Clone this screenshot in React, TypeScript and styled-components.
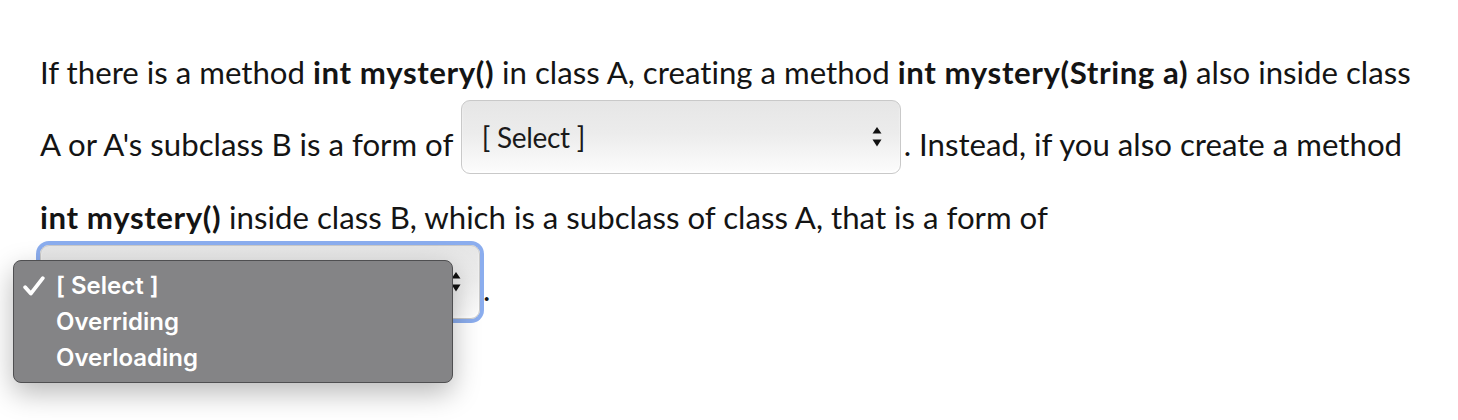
import React from "react";
import styled, { createGlobalStyle } from "styled-components";

const GlobalStyle = createGlobalStyle`
  body {
    margin: 0;
    background: #ffffff;
    font-family: Lato, "Open Sans", sans-serif;
  }
`

const Page = styled("main")`
  min-height: 420px;
`

const Question = styled("p")`
  margin: 0;
  padding: 45px 0 0 40px;
  width: 1390px;
  font-size: 31.2px;
  line-height: 55px;
  color: #141414;
  font-variant-ligatures: none;
`

const Code = styled("strong")`
  font-weight: 700;
  letter-spacing: 0.6px;
`

const SelectBox = styled("span")<{ $focused?: boolean }>`
  position: relative;
  display: inline-flex;
  align-items: center;
  justify-content: space-between;
  box-sizing: border-box;
  width: 440px;
  height: 74px;
  margin: 0 3px 16px 0;
  padding: 0 18px 0 20px;
  vertical-align: 8px;
  border: 1px solid #c9c9c9;
  border-radius: 9px;
  background: linear-gradient(to bottom, #e6e6e6 0%, #ececec 45%, #f8f8f8 85%, #fcfcfc 100%);
  box-shadow: ${(p) =>
    p.$focused
      ? "0 0 0 4px #8badee, inset 0 -2px 2px rgba(255,255,255,0.9)"
      : "inset 0 -2px 2px rgba(255,255,255,0.9)"};
  font-size: 28px;
  line-height: normal;
  letter-spacing: 0;
  color: #1a1a1a;
`

const Placeholder = styled("span")`
  letter-spacing: -0.3px;
`

const Menu = styled("div")`
  position: absolute;
  left: -28px;
  top: 14px;
  z-index: 2;
  box-sizing: border-box;
  width: 440px;
  padding: 7px 0 6px;
  border: 1px solid #4f4f51;
  border-radius: 8px;
  background: #848486;
  box-shadow: 0 10px 28px rgba(0, 0, 0, 0.28);
  font-family: Inter, "Liberation Sans", sans-serif;
  font-weight: 600;
  font-size: 24px;
  line-height: 36px;
  color: #ffffff;
`

const Option = styled("div")`
  display: flex;
  align-items: center;
`

const CheckSlot = styled("span")`
  display: inline-flex;
  align-items: center;
  width: 42px;
  padding-left: 9px;
  box-sizing: border-box;
  height: 36px;
`

const Arrows = () => (
  <svg width="10" height="22" viewBox="0 0 10 22">
    <path d="M5 1 L9.5 7.5 L0.5 7.5 Z" fill="#111" />
    <path d="M0.5 13.5 L9.5 13.5 L5 20.5 Z" fill="#111" />
  </svg>
)

const Check = () => (
  <svg width="22" height="20" viewBox="0 0 22 20">
    <path
      d="M2.2 11.2 L7.8 17.6 L19.8 2.2"
      fill="none"
      stroke="#fff"
      strokeWidth="3.8"
      strokeLinecap="round"
      strokeLinejoin="round"
    />
  </svg>
)

const options = ["[ Select ]", "Overriding", "Overloading"]

const App: React.FunctionComponent = () => (
  <Page>
    <GlobalStyle />
    <Question>
      If there is a method <Code>int mystery()</Code> in class A, creating a method{" "}
      <Code>int mystery(String a)</Code> also inside class A or A's subclass B is a form of{" "}
      <SelectBox>
        <Placeholder>[ Select ]</Placeholder>
        <Arrows />
      </SelectBox>
      . Instead, if you also create a method <Code>int mystery()</Code> inside class B, which
      is a subclass of class A, that is a form of{" "}
      <SelectBox $focused>
        <Placeholder>[ Select ]</Placeholder>
        <Arrows />
        <Menu>
          {options.map((o, i) => (
            <Option key={o}>
              <CheckSlot>{i === 0 && <Check />}</CheckSlot>
              {o}
            </Option>
          ))}
        </Menu>
      </SelectBox>
      .
    </Question>
  </Page>
)

export default App;
